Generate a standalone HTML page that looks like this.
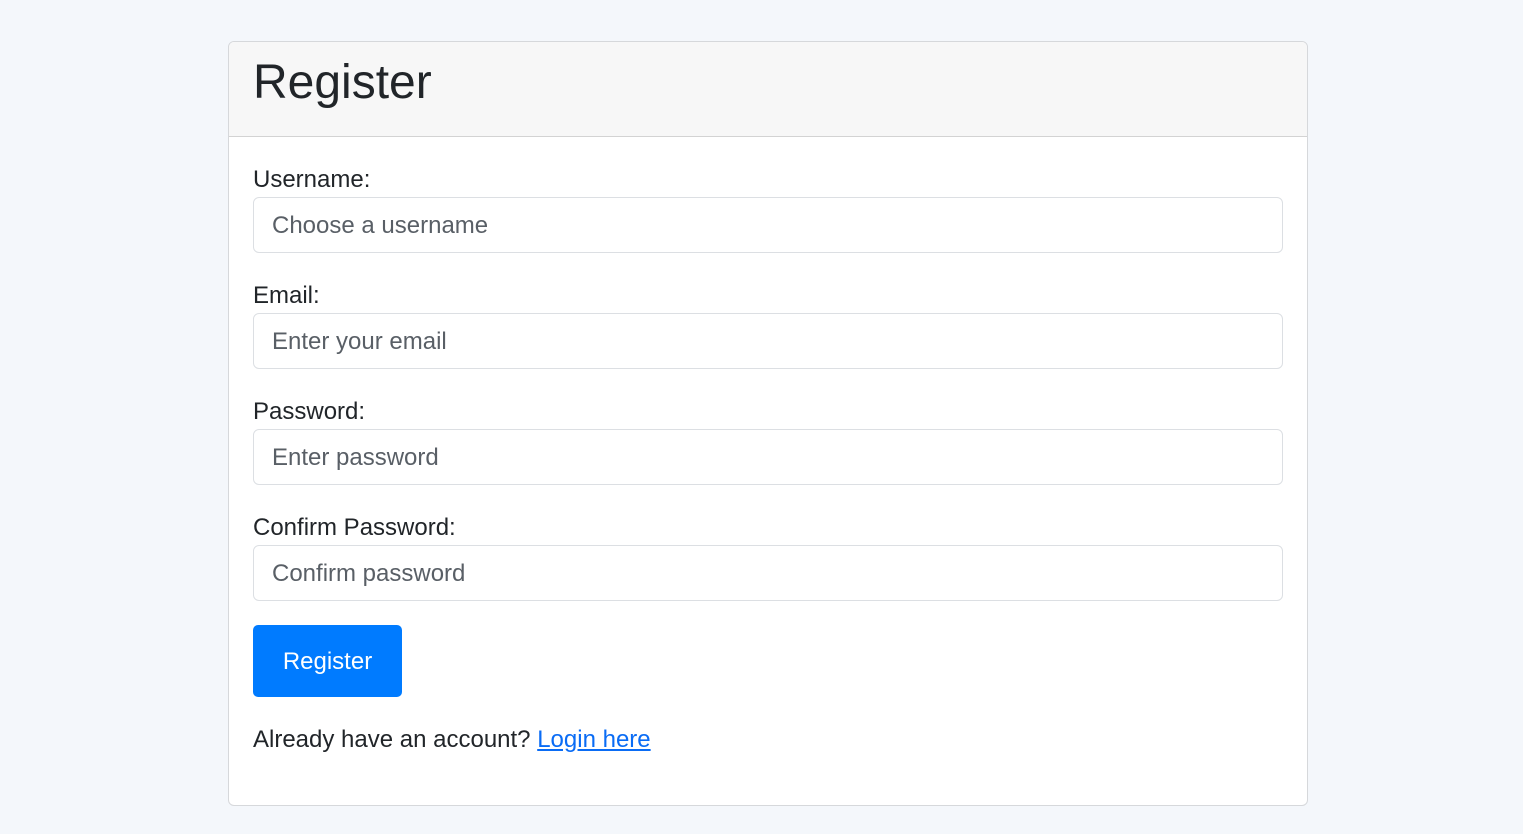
<!DOCTYPE html>
<html><head><style>
body{margin:0;width:1523px;height:834px;background:#f4f7fb;font-family:"Liberation Sans",sans-serif;color:#212529;position:relative;overflow:hidden}
.card{position:absolute;left:228px;top:41px;width:1078px;height:763px;background:#fff;border:1px solid #d6d8db;border-radius:6px;overflow:hidden}
.hdr{height:94px;background:#f7f7f7;border-bottom:1px solid #d3d3d3}
h1{margin:0;position:absolute;left:24px;top:11px;font-size:48px;font-weight:400;line-height:60px}
.lbl{position:absolute;left:24px;font-size:24px;line-height:26px}
.inp{position:absolute;left:24px;width:1028px;height:54px;border:1px solid #dcdfe3;border-radius:6px;font-size:24px;line-height:56px;color:#595f66;text-indent:18px}
.btn{position:absolute;left:24px;top:583px;width:149px;height:72px;background:#007bff;border-radius:5px;color:#fff;font-size:24px;line-height:74px;text-align:center}
.ft{position:absolute;left:24px;top:685px;font-size:24px;line-height:26px}
a{color:#0a6cf5;text-decoration:underline}
</style></head><body>
<div class="card">
<div class="hdr"><h1>Register</h1></div>
<div class="lbl" style="top:125px">Username:</div>
<div class="inp" style="top:155px">Choose a username</div>
<div class="lbl" style="top:241px">Email:</div>
<div class="inp" style="top:271px">Enter your email</div>
<div class="lbl" style="top:357px">Password:</div>
<div class="inp" style="top:387px">Enter password</div>
<div class="lbl" style="top:473px">Confirm Password:</div>
<div class="inp" style="top:503px">Confirm password</div>
<div class="btn">Register</div>
<div class="ft">Already have an account? <a>Login here</a></div>
</div>
</body></html>
